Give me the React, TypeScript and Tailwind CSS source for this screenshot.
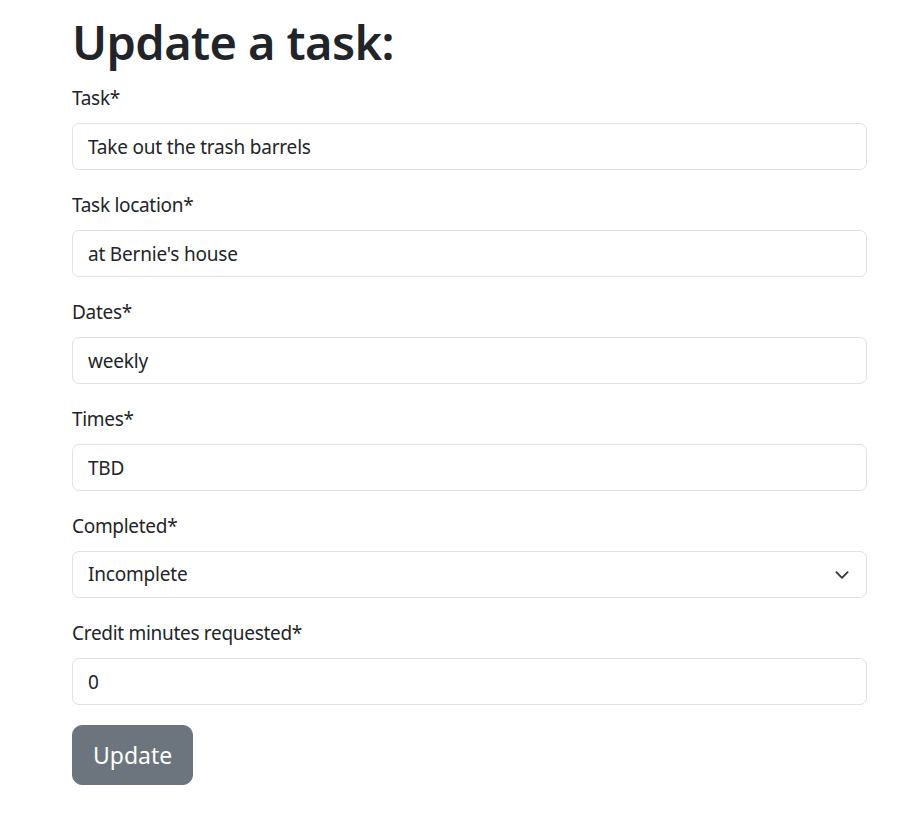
import { useState } from 'react';

const fields = [
  { label: 'Task*', value: 'Take out the trash barrels' },
  { label: 'Task location*', value: "at Bernie's house" },
  { label: 'Dates*', value: 'weekly' },
  { label: 'Times*', value: 'TBD' },
];

const inputCls =
  'block w-full h-[47px] px-[15px] rounded-[7px] border border-[#dee2e6] bg-white text-[19px] tracking-[-0.2px] text-[#212529] outline-none';
const labelCls = 'block text-[19px] tracking-[-0.3px] leading-[30px] mb-[10px]';

export default function App() {
  const [values, setValues] = useState(fields.map((f) => f.value));
  const [completed, setCompleted] = useState('Incomplete');
  const [minutes, setMinutes] = useState('0');

  return (
    <div
      className="min-h-screen bg-white text-[#212529] pt-[12px]"
      style={{ fontFamily: '"Noto Sans", "Open Sans", sans-serif' }}
    >
      <div className="ml-[72px] w-[795px]">
        <h1 className="text-[47px] font-semibold leading-[60px] mb-[11px] tracking-[-0.6px]">Update a task:</h1>
        <form onSubmit={(e) => e.preventDefault()}>
          {fields.map((f, i) => (
            <div key={f.label} className="mb-[20px]">
              <label className={labelCls}>{f.label}</label>
              <input
                className={inputCls}
                value={values[i]}
                onChange={(e) => setValues(values.map((v, j) => (j === i ? e.target.value : v)))}
              />
            </div>
          ))}
          <div className="mb-[20px]">
            <label className={labelCls}>Completed*</label>
            <div className="relative">
              <select
                className={inputCls + ' appearance-none pr-[50px]'}
                value={completed}
                onChange={(e) => setCompleted(e.target.value)}
              >
                <option>Incomplete</option>
                <option>Complete</option>
              </select>
              <svg
                className="pointer-events-none absolute right-[15px] top-1/2 -translate-y-1/2"
                width="20"
                height="15"
                viewBox="0 0 16 16"
                fill="none"
                stroke="#343a40"
                strokeWidth="2"
                strokeLinecap="round"
                strokeLinejoin="round"
              >
                <path d="m2 5 6 6 6-6" />
              </svg>
            </div>
          </div>
          <div className="mb-[20px]">
            <label className={labelCls}>Credit minutes requested*</label>
            <input className={inputCls} value={minutes} onChange={(e) => setMinutes(e.target.value)} />
          </div>
          <button
            type="submit"
            className="h-[60px] px-[20px] rounded-[10px] bg-[#6c757d] text-white text-[23px] border border-[#6c757d]"
          >
            Update
          </button>
        </form>
      </div>
    </div>
  );
}
